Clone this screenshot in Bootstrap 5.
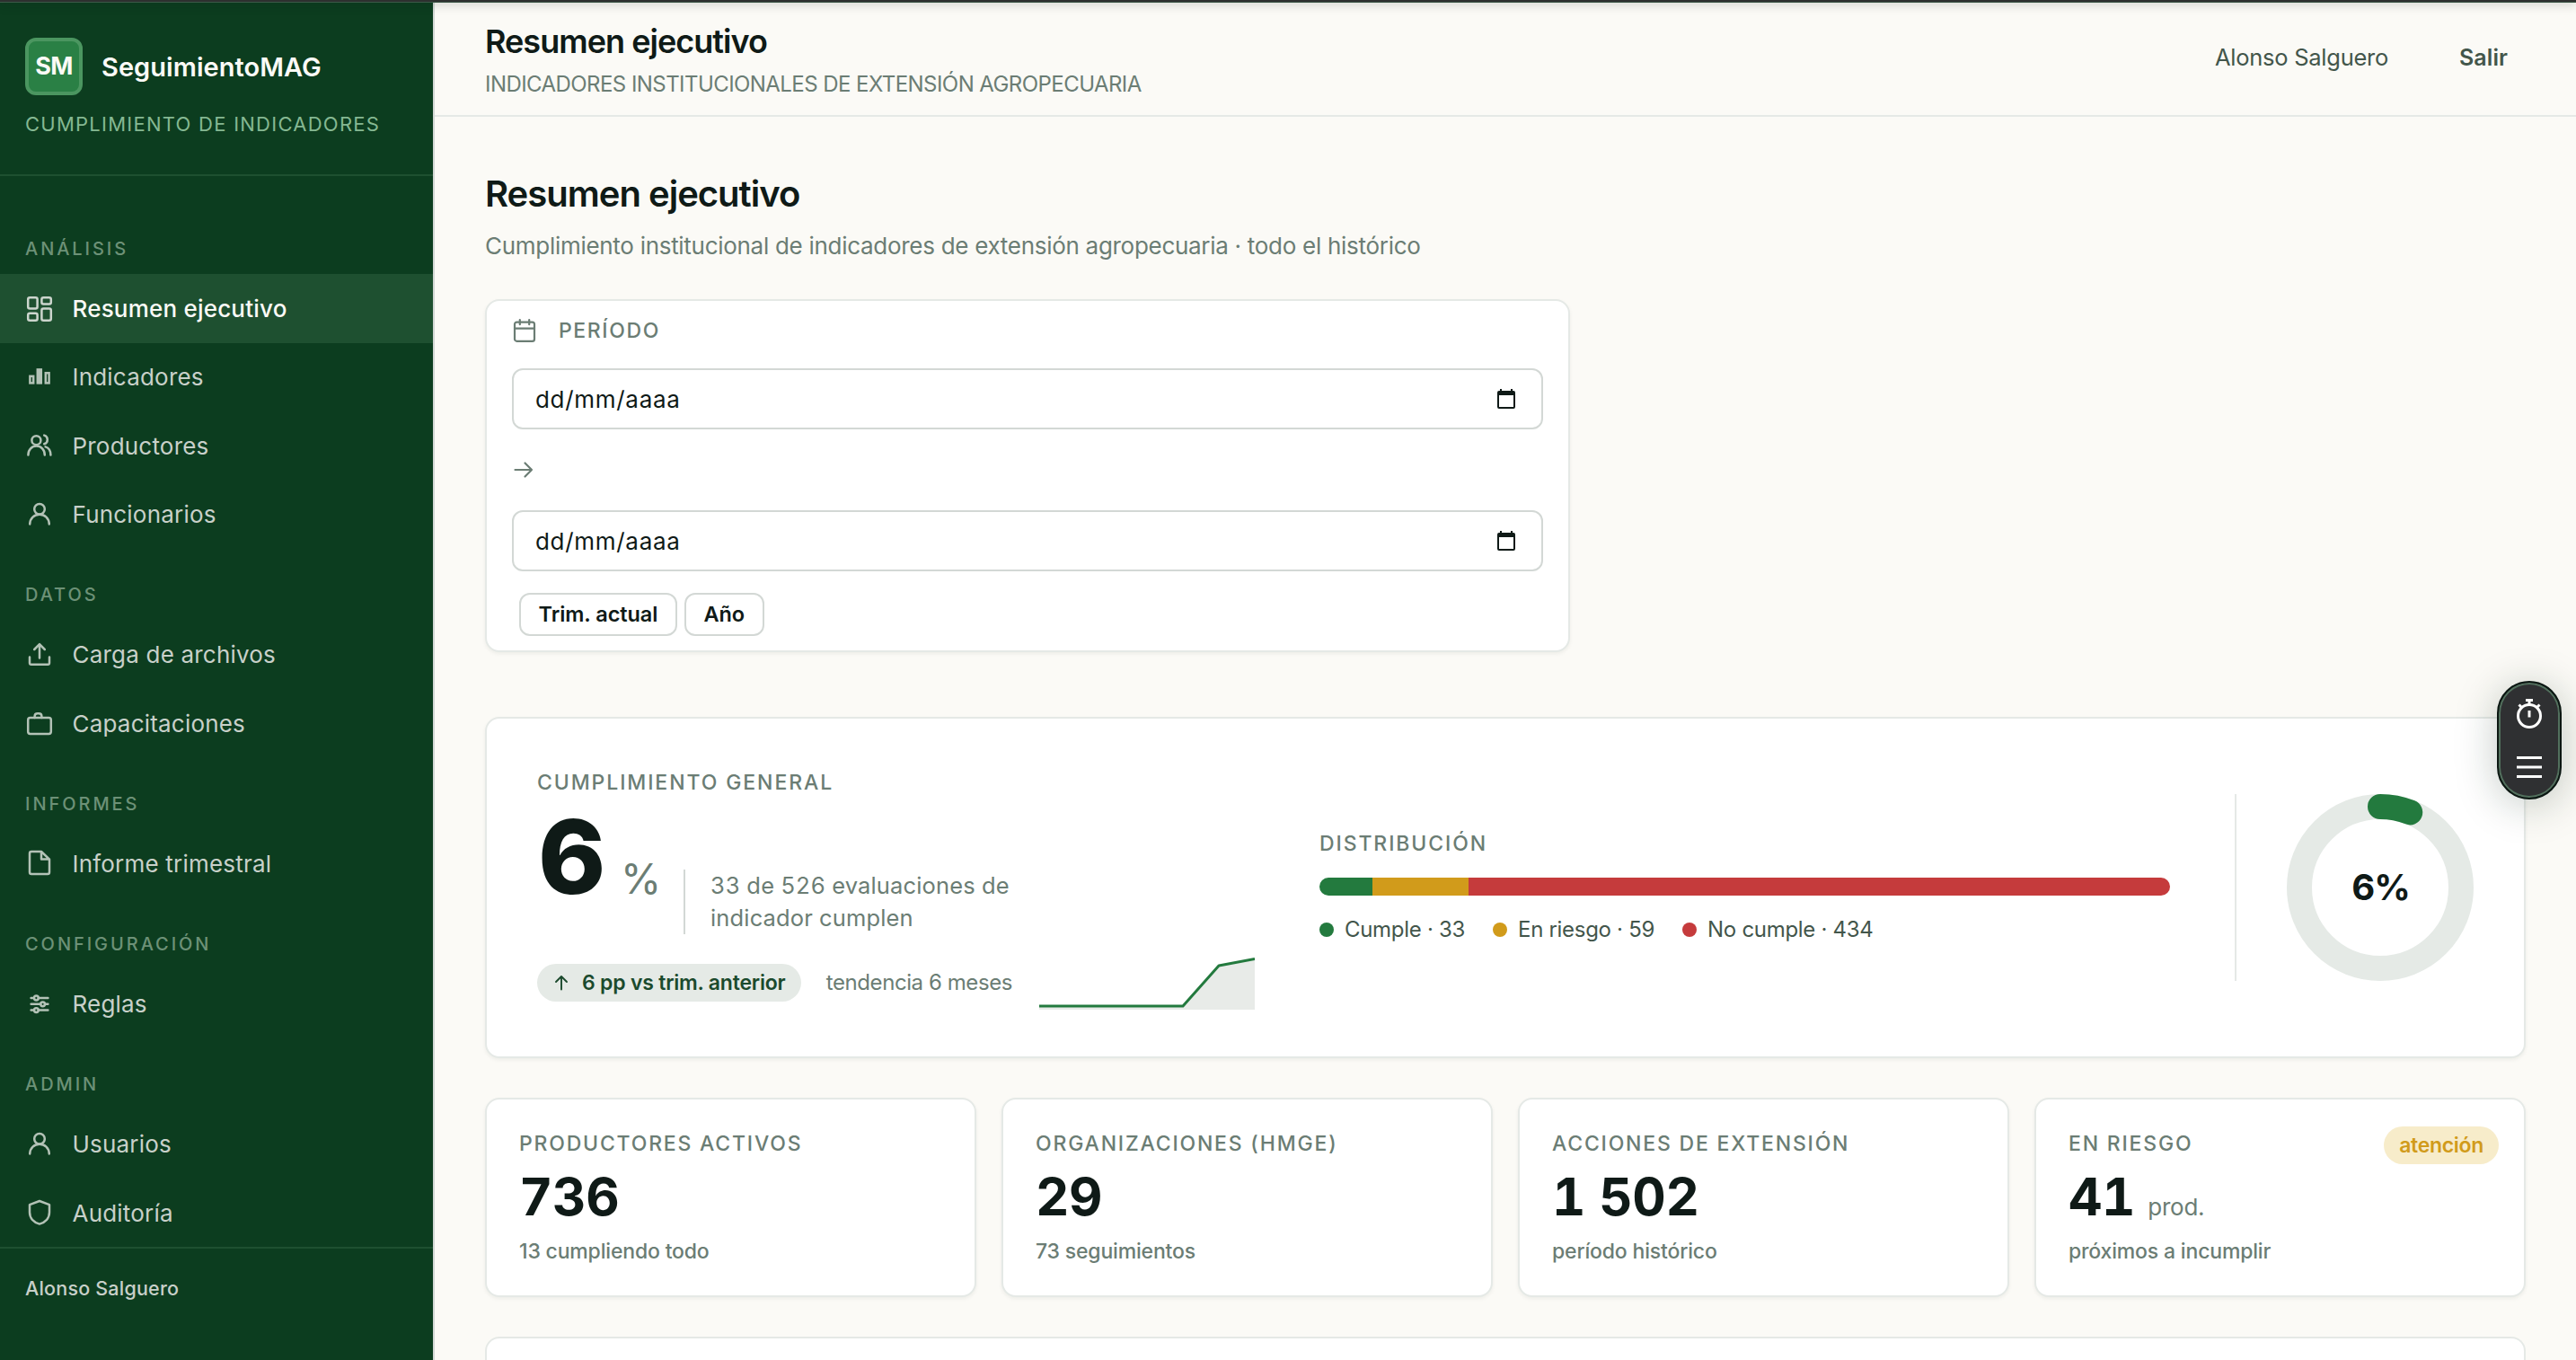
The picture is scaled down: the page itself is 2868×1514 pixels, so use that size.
<!DOCTYPE html>
<html lang="es">

<head>
  <meta charset="UTF-8" />
  <meta name="viewport" content="width=device-width, initial-scale=1">
  <title>Resumen ejecutivo - SeguimientoMAG</title>

  <!-- Bootstrap CSS -->
  <link href="https://cdn.jsdelivr.net/npm/bootstrap@5.3.3/dist/css/bootstrap.min.css" rel="stylesheet" />
  <style>
    :root {
      --verde: #237a3e;
      --ambar: #d19b1b;
      --rojo: #c53b3c;
      --tinta: #0f1a17;
      --gris: #6b7d74;
      --linea: #e5e9e6;
      --borde: #d3d8d5;
    }

    body {
      font-family: Inter, "Liberation Sans", sans-serif;
      background: #fbfaf6;
      color: var(--tinta);
    }

    svg { display: block; flex-shrink: 0; fill: none; stroke: currentColor; stroke-linecap: round; stroke-linejoin: round; }

    /* Borde superior de la ventana */
    .app-top { position: absolute; top: 0; left: 0; right: 0; height: 3px; background: #2d302f; border-bottom: 1px solid #3c5847; box-shadow: 0 0 12px rgba(15, 35, 25, .5); z-index: 5; }

    /* Sidebar */
    .app-side { width: 484px; height: 1514px; background: #0c3d1f; border-right: 2px solid #d3d8d5; }
    .app-brand { height: 197px; padding: 42px 28px 0; border-bottom: 2px solid #1e5030; }
    .app-logo { width: 64px; height: 64px; border: 4px solid #4b9660; border-radius: 12px; background: #2a8045; color: #fbfaf6; font-size: 27px; font-weight: 700; letter-spacing: -.6px; }
    .app-name { color: #fbfaf6; font-size: 29px; font-weight: 600; letter-spacing: .05px; line-height: 36px; margin: 1px 0 0 21px; }
    .app-tag { color: #85b892; font-size: 22px; line-height: 30px; letter-spacing: 1.25px; margin-top: 17px; white-space: nowrap; }
    .side-nav { padding-top: 29.5px; }
    .side-title { color: #6d9177; font-size: 20px; font-weight: 500; letter-spacing: 2.95px; line-height: 32px; padding: 35.5px 28px 12.3px; }
    .side-item { height: 76.4px; padding: 0 28px; gap: 20.5px; color: #c8d0c9; font-size: 26px; letter-spacing: .2px; text-decoration: none; }
    .side-item svg { width: 32px; height: 32px; stroke-width: 1.25; color: #b3c2b6; }
    .side-item.activo { background: #1e5030; color: #fbfaf6; font-weight: 500; }
    .side-item.activo svg { color: #ccd5cd; }
    .side-user { height: 126px; border-top: 2px solid #1e5030; padding: 28px; color: #c8d0c9; font-size: 21.5px; font-weight: 500; line-height: 32px; letter-spacing: .2px; }

    /* Barra superior */
    .app-bar { height: 130px; padding: 23px 56px 0; border-bottom: 2px solid var(--linea); }
    .bar-title { font-size: 36px; line-height: 46px; font-weight: 600; letter-spacing: -.97px; }
    .bar-sub { font-size: 24px; line-height: 36px; letter-spacing: -.56px; color: var(--gris); margin-top: 7px; }
    .bar-user { color: #43564b; font-size: 25.5px; line-height: 36px; letter-spacing: -.26px; margin-top: 23px; gap: 79px; padding-right: 20px; }
    .bar-user strong { font-size: 25px; font-weight: 600; letter-spacing: .07px; }

    .app-body { padding: 60px 56px 0; }
    .page-title { font-size: 40px; line-height: 52px; font-weight: 600; letter-spacing: -.99px; margin: 0 0 12px; }
    .page-sub { font-size: 26px; line-height: 40px; letter-spacing: -.29px; color: var(--gris); margin: 0 0 39px; }

    .panel { background: #fff; border: 2px solid var(--linea); border-radius: 16px; box-shadow: 0 2px 4px rgba(15, 26, 23, .06); }
    .etiqueta { font-size: 23px; font-weight: 500; letter-spacing: 1.9px; line-height: 30px; color: var(--gris); }

    /* Período */
    .periodo { width: 1208px; height: 393px; padding: 18px 28px 0; margin-bottom: 72px; }
    .periodo .etiqueta { letter-spacing: 1.6px; gap: 24px; margin-bottom: 27px; }
    .fecha { height: 68px; border: 2px solid var(--borde); border-radius: 12px; padding: 0 29px 0 24px; font-size: 26px; letter-spacing: .7px; color: var(--tinta); }
    .flecha { height: 90px; color: var(--gris); }
    .btn-periodo { height: 48px; padding: 0 19.5px; border: 2px solid var(--borde); border-radius: 12px; background: #fff; color: var(--tinta); font-size: 23.5px; font-weight: 600; line-height: 44px; letter-spacing: -.05px; }

    /* Cumplimiento general */
    .general { height: 380px; padding: 0 56px; gap: 72px; margin-bottom: 44px; }
    .general-izq { width: 799px; }
    .cifra { font-size: 114px; line-height: 112px; font-weight: 800; width: 92px; margin-left: 1px; }
    .cifra-pct { font-size: 46px; line-height: 50px; color: var(--gris); width: 70px; }
    .cifra-texto { width: 380px; border-left: 2px solid var(--borde); padding-left: 28px; font-size: 25.5px; line-height: 36px; letter-spacing: .15px; color: var(--gris); font-variant-numeric: tabular-nums; }
    .pildora { height: 42px; border-radius: 21px; font-size: 23px; font-weight: 600; line-height: 42px; }
    .pildora-verde { background: #e5eae6; color: #1b4a2d; width: 294px; padding-left: 18px; gap: 14px; letter-spacing: -.21px; white-space: nowrap; }
    .tendencia { font-size: 24px; letter-spacing: -.42px; color: var(--gris); margin: 0 30px 0 28px; white-space: nowrap; }
    .barra { height: 20px; border-radius: 10px; margin: 23.5px 0 21px; background: transparent; }
    .leyenda { font-size: 24px; line-height: 34px; letter-spacing: -.3px; color: #43564b; gap: 31px; }
    .leyenda i { width: 16px; height: 16px; border-radius: 50%; margin-right: 12px; }
    .anillo { border-left: 2px solid var(--linea); padding-left: 56px; }
    .anillo text { font-size: 40px; font-weight: 700; letter-spacing: -.98px; fill: var(--tinta); stroke: none; }

    /* Tarjetas */
    .tarjetas { display: grid; grid-template-columns: repeat(4, 1fr); gap: 28px; margin-bottom: 44px; }
    .dato { height: 222px; padding: 34px 36px 0; }
    .dato .etiqueta { letter-spacing: 1.8px; }
    .dato-num { height: 64px; font-size: 58px; line-height: 64px; font-weight: 700; margin: 12px 0 13px; letter-spacing: -.4px; font-variant-numeric: tabular-nums; }
    .dato-num small { font-size: 26px; font-weight: 400; letter-spacing: -.2px; color: var(--gris); margin-left: 14px; }
    .dato-pie { font-size: 23px; line-height: 32px; font-weight: 500; letter-spacing: -.17px; color: var(--gris); }
    .pildora-ambar { position: absolute; top: 30px; right: 28px; padding: 0 17px; background: #f7ecca; color: var(--ambar); letter-spacing: -.31px; }
    .panel-corte { height: 26px; border-bottom: 0; border-radius: 16px 16px 0 0; box-shadow: none; }

    /* Control flotante */
    .flotante { position: absolute; left: 2780px; top: 758px; width: 72px; height: 132px; border-radius: 36px; background: #2f3032; border: 2px solid #0b1712; box-shadow: inset 0 0 0 2px #52705d, 0 6px 46px rgba(15, 45, 28, .25); z-index: 6; color: #fff; }
  </style>
</head>

<body>

  <div class="app-top"></div>

  <div class="d-flex">
    <aside class="app-side d-flex flex-column flex-shrink-0">
      <div class="app-brand">
        <div class="d-flex align-items-center">
          <div class="app-logo d-flex align-items-center justify-content-center">SM</div>
          <div class="app-name">SeguimientoMAG</div>
        </div>
        <div class="app-tag">CUMPLIMIENTO DE INDICADORES</div>
      </div>

      <nav class="side-nav flex-grow-1">
        <div class="side-title">ANÁLISIS</div>
        <a href="#" class="side-item activo d-flex align-items-center">
          <svg viewBox="0 0 16 16"><rect x="1.6" y="1.6" width="5.2" height="6.2" rx="1" /><rect x="9.2" y="1.6" width="5.2" height="3.6" rx="1" /><rect x="1.6" y="10.4" width="5.2" height="4" rx="1" /><rect x="9.2" y="7.8" width="5.2" height="6.6" rx="1" /></svg>
          Resumen ejecutivo
        </a>
        <a href="#" class="side-item d-flex align-items-center">
          <svg viewBox="0 0 16 16" style="stroke-linejoin: miter"><rect x="2.7" y="7.4" width="1.9" height="3.8" /><rect x="6.9" y="3.7" width="2" height="7.5" /><rect x="11.4" y="5.6" width="1.9" height="5.6" /><path d="M7.9 4v7" /></svg>
          Indicadores
        </a>
        <a href="#" class="side-item d-flex align-items-center">
          <svg viewBox="0 0 16 16"><circle cx="6.2" cy="5.1" r="2.5" /><path d="M1.7 13.3c0-2.9 2-5 4.6-5s4.6 2.1 4.6 5M10.6 2.3a2.5 2.5 0 0 1 0 4.8M11.3 8.7c1.8.6 2.9 2.3 2.9 4.6" /></svg>
          Productores
        </a>
        <a href="#" class="side-item d-flex align-items-center">
          <svg viewBox="0 0 16 16"><circle cx="8" cy="4.9" r="2.9" /><path d="M2.6 13.2c.2-3.2 2.4-5.3 5.4-5.3s5.2 2.1 5.4 5.3" /></svg>
          Funcionarios
        </a>

        <div class="side-title">DATOS</div>
        <a href="#" class="side-item d-flex align-items-center">
          <svg viewBox="0 0 16 16"><path d="M8 9.7V2.2M5.1 5 8 2.1 10.9 5M2.5 9.3v3.2q0 .9.9.9h9.2q.9 0 .9-.9V9.3" /></svg>
          Carga de archivos
        </a>
        <a href="#" class="side-item d-flex align-items-center">
          <svg viewBox="0 0 16 16"><rect x="1.6" y="5" width="12.8" height="9" rx="1.2" /><path d="M5.3 5V4.2q0-1.6 1.600-1.600h.7q1.600 0 1.600 1.600V5" /></svg>
          Capacitaciones
        </a>

        <div class="side-title">INFORMES</div>
        <a href="#" class="side-item d-flex align-items-center">
          <svg viewBox="0 0 16 16"><path d="M9 1.5H3.5q-1 0-1 1v10.5q0 1 1 1h9q1 0 1-1V5.8zM9 1.5v4.3h4.5" /></svg>
          Informe trimestral
        </a>

        <div class="side-title">CONFIGURACIÓN</div>
        <a href="#" class="side-item d-flex align-items-center">
          <svg viewBox="0 0 16 16"><path d="M3.3 4.5h1.6M7.4 4.5h5.3M3.3 7.9h5.3M11 7.9h1.7M3.3 11.3h1.6M7.4 11.3h5.3" /><circle cx="6.2" cy="4.5" r="1.2" /><circle cx="9.8" cy="7.9" r="1.2" /><circle cx="6.2" cy="11.3" r="1.2" /></svg>
          Reglas
        </a>

        <div class="side-title">ADMIN</div>
        <a href="#" class="side-item d-flex align-items-center">
          <svg viewBox="0 0 16 16"><circle cx="8" cy="4.9" r="2.9" /><path d="M2.6 13.2c.2-3.2 2.4-5.3 5.4-5.3s5.2 2.1 5.4 5.3" /></svg>
          Usuarios
        </a>
        <a href="#" class="side-item d-flex align-items-center">
          <svg viewBox="0 0 16 16"><path d="M8 1.5 13.5 3.6v4.2c0 3.2-2.2 5.6-5.5 6.5-3.300-.9-5.500-3.300-5.500-6.500V3.600z" /></svg>
          Auditoría
        </a>
      </nav>

      <div class="side-user">Alonso Salguero</div>
    </aside>

    <div class="flex-grow-1">
      <header class="app-bar d-flex justify-content-between align-items-start">
        <div>
          <div class="bar-title">Resumen ejecutivo</div>
          <div class="bar-sub">INDICADORES INSTITUCIONALES DE EXTENSIÓN AGROPECUARIA</div>
        </div>
        <div class="bar-user d-flex">
          <span>Alonso Salguero</span>
          <strong>Salir</strong>
        </div>
      </header>

      <main class="app-body">
        <h1 class="page-title">Resumen ejecutivo</h1>
        <p class="page-sub">Cumplimiento institucional de indicadores de extensión agropecuaria · todo el histórico</p>

        <section class="panel periodo">
          <div class="etiqueta d-flex align-items-center">
            <svg width="28" height="28" viewBox="0 0 14 14" stroke-width="1.1"><rect x="1.5" y="2.3" width="11" height="10.6" rx="1.2" /><path d="M1.5 5.8h11M4.4 1v2.6M9.6 1v2.6" /></svg>
            PERÍODO
          </div>
          <div class="fecha d-flex align-items-center justify-content-between">
            <span>dd/mm/aaaa</span>
            <svg width="20" height="22" viewBox="0 0 20 22" style="fill: currentColor; stroke: none"><path fill-rule="evenodd" d="M3 0h2v2h10V0h2v2h1q2 0 2 2v16q0 2-2 2H2q-2 0-2-2V4q0-2 2-2h1zM2 7v13h16V7z" /></svg>
          </div>
          <div class="flecha d-flex align-items-center">
            <svg width="24" height="24" viewBox="0 0 24 24" stroke-width="2.2"><path d="M3.5 12H22M14.5 4.5 22 12l-7.5 7.5" /></svg>
          </div>
          <div class="fecha d-flex align-items-center justify-content-between">
            <span>dd/mm/aaaa</span>
            <svg width="20" height="22" viewBox="0 0 20 22" style="fill: currentColor; stroke: none"><path fill-rule="evenodd" d="M3 0h2v2h10V0h2v2h1q2 0 2 2v16q0 2-2 2H2q-2 0-2-2V4q0-2 2-2h1zM2 7v13h16V7z" /></svg>
          </div>
          <div class="d-flex gap-2 mt-4 ms-2">
            <button type="button" class="btn btn-periodo">Trim. actual</button>
            <button type="button" class="btn btn-periodo">Año</button>
          </div>
        </section>

        <section class="panel general d-flex align-items-center">
          <div class="general-izq pt-1">
            <div class="etiqueta">CUMPLIMIENTO GENERAL</div>
            <div class="d-flex align-items-baseline mt-2 pt-1">
              <div class="cifra">6</div>
              <div class="cifra-pct">%</div>
              <div class="cifra-texto">33 de 526 evaluaciones de<br>indicador cumplen</div>
            </div>
            <div class="d-flex align-items-center mt-4">
              <div class="pildora pildora-verde d-flex align-items-center">
                <svg width="18" height="18" viewBox="0 0 18 18" stroke-width="1.9"><path d="M9 16.5V2M3 8l6-6 6 6" /></svg>
                6 pp vs trim. anterior
              </div>
              <div class="tendencia">tendencia 6 meses</div>
              <svg width="240" height="60" viewBox="0 0 240 60" style="stroke-linecap: butt">
                <path d="M0 56H160L200 11 240 3.5V60H0z" fill="#e8ebe8" stroke="none" />
                <path d="M0 56H160L200 11 240 3.5" stroke="#237a3e" stroke-width="3" />
              </svg>
            </div>
          </div>

          <div class="flex-grow-1">
            <div class="etiqueta">DISTRIBUCIÓN</div>
            <div class="barra progress">
              <div class="progress-bar" style="width: 6.27%; background: var(--verde)"></div>
              <div class="progress-bar" style="width: 11.22%; background: var(--ambar)"></div>
              <div class="progress-bar" style="width: 82.51%; background: var(--rojo)"></div>
            </div>
            <div class="leyenda d-flex">
              <span class="d-flex align-items-center"><i style="background: var(--verde)"></i>Cumple · 33</span>
              <span class="d-flex align-items-center"><i style="background: var(--ambar)"></i>En riesgo · 59</span>
              <span class="d-flex align-items-center"><i style="background: var(--rojo)"></i>No cumple · 434</span>
            </div>
          </div>

          <div class="anillo">
            <svg width="208" height="208" viewBox="0 0 208 208" stroke-width="28">
              <circle cx="104" cy="104" r="90" stroke="#e5eae6" />
              <circle cx="104" cy="104" r="90" stroke="#237a3e" stroke-dasharray="34 600" transform="rotate(-90 104 104)" />
              <text x="104.500" y="118" text-anchor="middle">6%</text>
            </svg>
          </div>
        </section>

        <section class="tarjetas">
          <div class="panel dato">
            <div class="etiqueta">PRODUCTORES ACTIVOS</div>
            <div class="dato-num">736</div>
            <div class="dato-pie">13 cumpliendo todo</div>
          </div>
          <div class="panel dato">
            <div class="etiqueta">ORGANIZACIONES (HMGE)</div>
            <div class="dato-num">29</div>
            <div class="dato-pie">73 seguimientos</div>
          </div>
          <div class="panel dato">
            <div class="etiqueta">ACCIONES DE EXTENSIÓN</div>
            <div class="dato-num">1 502</div>
            <div class="dato-pie">período histórico</div>
          </div>
          <div class="panel dato position-relative">
            <div class="etiqueta">EN RIESGO</div>
            <span class="pildora pildora-ambar">atención</span>
            <div class="dato-num">41<small>prod.</small></div>
            <div class="dato-pie">próximos a incumplir</div>
          </div>
        </section>

        <section class="panel panel-corte"></section>
      </main>
    </div>
  </div>

  <!-- Cronómetro y menú -->
  <div class="flotante">
    <svg width="68" height="128" viewBox="0 0 68 128" stroke-width="3" style="stroke-linecap: butt">
      <circle cx="34" cy="37" r="12.5" />
      <path d="M34 31v7.5M30 19.5h8M34 19v5M22.5 24.5l3.5 3.500M45.500 24.500 42 28M20 83.500h28M20 94h28M20 104.500h28" />
    </svg>
  </div>

  <!-- Bootstrap JS -->
  <script src="https://cdn.jsdelivr.net/npm/bootstrap@5.3.3/dist/js/bootstrap.bundle.min.js"></script>
</body>

</html>
